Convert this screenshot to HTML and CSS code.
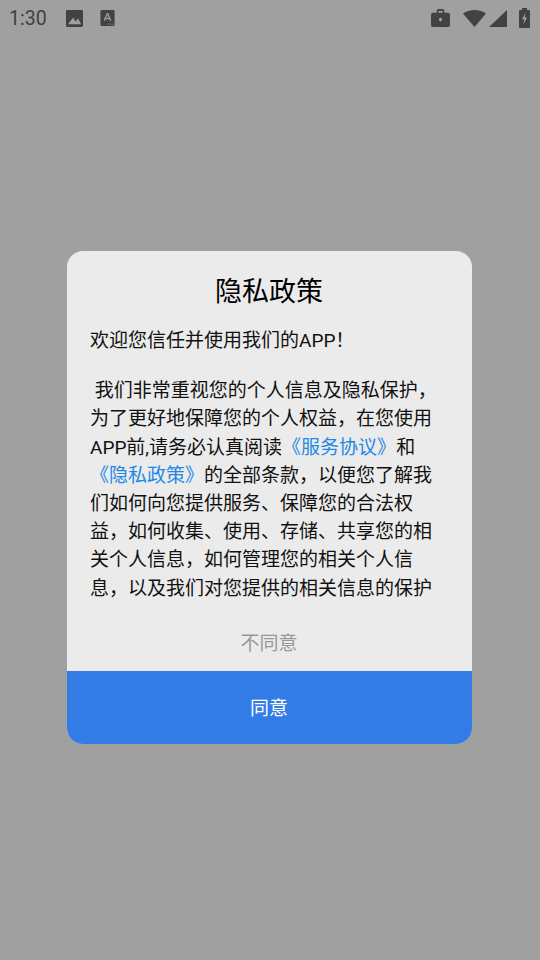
FILE: index.html
```html
<!DOCTYPE html>
<html lang="zh-CN">

<head>
  <meta charset="UTF-8">
  <meta name="viewport" content="width=device-width, initial-scale=1.0">
  <title>隐私政策</title>
  <link rel="stylesheet" href="styles.css">
</head>

<body>
  <div class="status-bar">
    <div class="status-left">
      <span class="time">1:30</span>
      <svg class="icon-photo" width="17" height="17" viewBox="0 0 18 18">
        <path fill="#424242" fill-rule="evenodd" d="M1.500 0h15A1.500 1.500 0 0 1 18 1.500v15a1.500 1.500 0 0 1-1.500 1.500h-15A1.500 1.500 0 0 1 0 16.500v-15A1.500 1.500 0 0 1 1.500 0zM2 15h14l-3.200-6-2.800 3.200-2.300-4.200z"/>
      </svg>
      <svg class="icon-font" width="15" height="16" viewBox="0 0 15 17">
        <rect width="15" height="17" rx="1.500" fill="#424242"/>
        <path fill="none" stroke="#a0a0a0" stroke-width="1.400" d="M4 11.500 7.200 4h.6L11 11.500M5 9h5"/>
        <path stroke="#a0a0a0" stroke-width="1" stroke-dasharray="1 1.200" d="M8 15h6"/>
      </svg>
    </div>
    <div class="status-right">
      <svg class="icon-work" width="19" height="18" viewBox="0 0 20 17" preserveAspectRatio="none">
        <path fill="#424242" fill-rule="evenodd" d="M2 3.500h4V2a2 2 0 0 1 2-2h4a2 2 0 0 1 2 2v1.500h4a2 2 0 0 1 2 2V15a2 2 0 0 1-2 2H2a2 2 0 0 1-2-2V5.500a2 2 0 0 1 2-2zM7.800 3.500h4.400V1.800H7.800zM10 8.300a1.700 1.700 0 1 0 0 3.400 1.700 1.700 0 0 0 0-3.400z"/>
      </svg>
      <svg class="icon-wifi" width="23" height="17" viewBox="0 0 23 17">
        <path fill="#424242" d="M0 3.500C3 1.200 7 0 11.500 0S20 1.200 23 3.500L11.500 17z"/>
      </svg>
      <svg class="icon-signal" width="18" height="17" viewBox="0 0 18 18" preserveAspectRatio="none">
        <path fill="#424242" d="M18 0v18H0z"/>
      </svg>
      <svg class="icon-battery" width="11" height="20" viewBox="0 0 11 19" preserveAspectRatio="none">
        <path fill="#424242" fill-rule="evenodd" d="M3 0h5v2h2a1 1 0 0 1 1 1v15a1 1 0 0 1-1 1H1a1 1 0 0 1-1-1V3a1 1 0 0 1 1-1h2zM6.500 4.500 3 10.800h2.200L4.500 15.500 8 9H5.800z"/>
      </svg>
    </div>
  </div>

  <div class="overlay">
    <div class="dialog">
      <div class="dialog-title">隐私政策</div>
      <div class="dialog-body">
        <p class="welcome">欢迎您信任并使用我们的APP！</p>
        <p class="terms">&nbsp;我们非常重视您的个人信息及隐私保护，为了更好地保障您的个人权益，在您使用APP前,请务必认真阅读<span class="link">《服务协议》</span>和<span class="link">《隐私政策》</span>的全部条款，以便您了解我们如何向您提供服务、保障您的合法权益，如何收集、使用、存储、共享您的相关个人信息，如何管理您的相关个人信息，以及我们对您提供的相关信息的保护措施。</p>
      </div>
      <div class="btn-refuse">不同意</div>
      <div class="btn-agree">同意</div>
    </div>
  </div>
</body>

</html>
```

FILE: styles.css
```css
body {
  margin: 0;
  width: 540px;
  height: 960px;
  overflow: hidden;
  background-color: #a0a0a0;
  font-family: "Roboto", "Noto Sans CJK SC", sans-serif;
}

.status-bar {
  height: 36px;
  display: flex;
  justify-content: space-between;
  align-items: center;
  padding: 0 10px 0 9px;
}

.status-left,
.status-right {
  display: flex;
  align-items: center;
}

.time {
  font-size: 19.500px;
  color: #424242;
  width: 57px;
}

.icon-font {
  margin-left: 17px;
}

.icon-wifi {
  margin-left: 13px;
}

.icon-signal {
  margin-left: 3px;
}

.icon-battery {
  margin-left: 12px;
}

.overlay {
  padding: 215px 0 0 67px;
}

.dialog {
  width: 405px;
  height: 493px;
  box-sizing: border-box;
  background-color: #ebebeb;
  border-radius: 16px;
  overflow: hidden;
}

.dialog-title {
  height: 76px;
  padding: 22px 1px 0 0;
  box-sizing: border-box;
  line-height: 38px;
  font-size: 27px;
  color: #000;
  text-align: center;
}

.dialog-body {
  height: 275px;
  overflow: hidden;
  padding: 0 24px 0 23px;
  font-size: 19px;
  line-height: 28.200px;
  color: #111;
}

.dialog-body p {
  margin: 0;
}

.welcome {
  padding-bottom: 22px;
  margin-top: -3px;
}

.link {
  color: #1e88e5;
}

.btn-refuse {
  height: 69px;
  padding: 7px 1px 0 0;
  box-sizing: border-box;
  line-height: 69px;
  font-size: 19px;
  color: #999;
  text-align: center;
}

.btn-agree {
  height: 73px;
  padding: 2px 1px 0 0;
  box-sizing: border-box;
  line-height: 72px;
  background-color: #337ce5;
  font-size: 19px;
  color: #fff;
  text-align: center;
}
```
